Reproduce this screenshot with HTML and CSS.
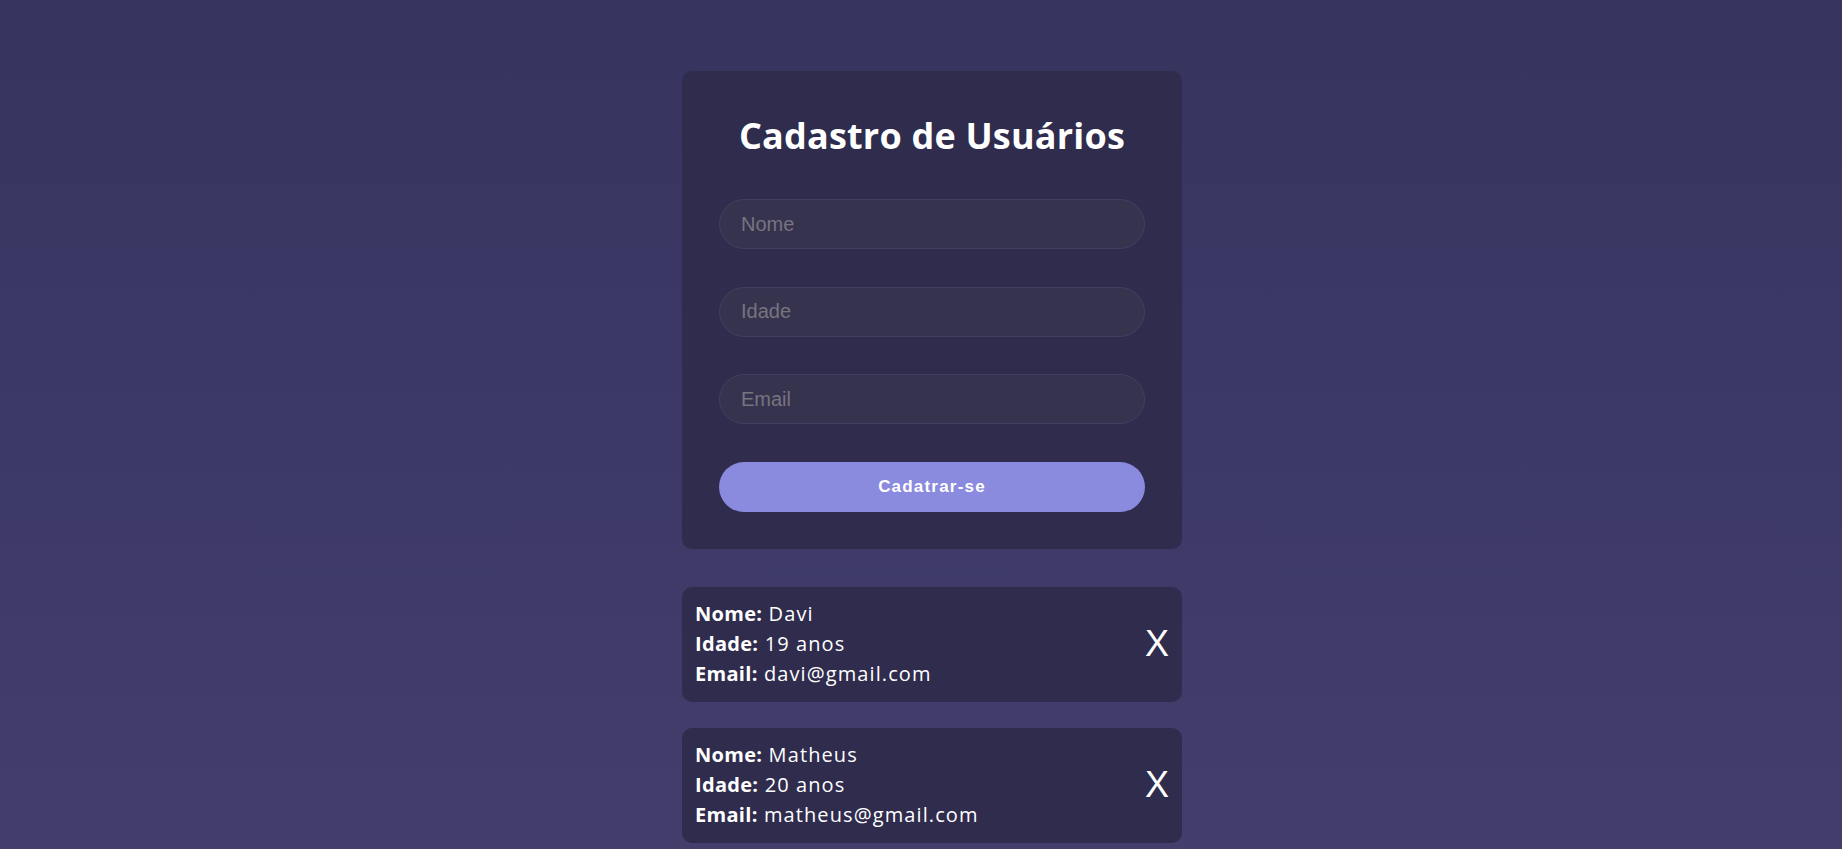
FILE: index.html
```html
<!DOCTYPE html>
<html lang="pt-BR">
<head>
<meta charset="utf-8">
<title>Cadastro de Usuários</title>
<link rel="stylesheet" href="styles.css">
</head>
<body>
<main class="page">
  <form class="form-card">
    <h1 class="title">Cadastro de Usuários</h1>
    <input class="field" type="text" placeholder="Nome">
    <input class="field" type="number" placeholder="Idade">
    <input class="field" type="email" placeholder="Email">
    <button class="submit" type="button">Cadatrar-se</button>
  </form>

  <div class="user-card">
    <div class="user-info">
      <p><strong>Nome:</strong> Davi</p>
      <p><strong>Idade:</strong> 19 anos</p>
      <p><strong>Email:</strong> davi@gmail.com</p>
    </div>
    <button class="remove" type="button">X</button>
  </div>

  <div class="user-card">
    <div class="user-info">
      <p><strong>Nome:</strong> Matheus</p>
      <p><strong>Idade:</strong> 20 anos</p>
      <p><strong>Email:</strong> matheus@gmail.com</p>
    </div>
    <button class="remove" type="button">X</button>
  </div>
</main>
</body>
</html>
```
FILE: styles.css
```css
* {
  box-sizing: border-box;
}

html, body {
  margin: 0;
  padding: 0;
}

body {
  min-height: 100vh;
  background: linear-gradient(180deg, #37345f 0%, #3c3866 45%, #433e6c 100%);
  font-family: "Open Sans", "Noto Sans", sans-serif;
  color: #ffffff;
  padding-left: 22px;
}

.page {
  width: 500px;
  margin: 0 auto;
  padding-top: 71px;
  display: flex;
  flex-direction: column;
  gap: 26px;
}

.form-card {
  background: #2f2c4d;
  border-radius: 10px;
  padding: 33px 37px 37px 37px;
  display: flex;
  flex-direction: column;
  margin-bottom: 12px;
}

.title {
  margin: 0 0 31px 0;
  text-align: center;
  font-family: "Open Sans", sans-serif;
  font-weight: 700;
  font-size: 36px;
  line-height: 64px;
  letter-spacing: 0.2px;
  color: #ffffff;
}

.field {
  height: 50px;
  width: 100%;
  border-radius: 25px;
  border: 1px solid #423e62;
  background: #36334f;
  padding: 0 21px;
  font-family: "Liberation Sans", Arial, sans-serif;
  font-size: 20px;
  color: #e0e0e0;
  margin-bottom: 37.5px;
  outline: none;
}

.field::placeholder {
  color: #77737f;
}

.field::-webkit-outer-spin-button,
.field::-webkit-inner-spin-button {
  -webkit-appearance: none;
  margin: 0;
}

.submit {
  height: 50px;
  width: 100%;
  border: none;
  border-radius: 25px;
  background: #8a8ade;
  color: #ffffff;
  font-family: "Liberation Sans", Arial, sans-serif;
  font-weight: 700;
  font-size: 17px;
  letter-spacing: 1.2px;
  cursor: pointer;
}

.user-card {
  background: #2f2c4d;
  border-radius: 10px;
  min-height: 115px;
  padding: 12px 13px 12px 13px;
  display: flex;
  align-items: center;
  justify-content: space-between;
}

.user-info p {
  margin: 0;
  font-family: "Open Sans", sans-serif;
  font-size: 20px;
  line-height: 30px;
  font-weight: 400;
  letter-spacing: 1.1px;
  color: #ffffff;
}

.user-info strong {
  font-weight: 700;
  letter-spacing: 0.3px;
}

.remove {
  background: none;
  border: none;
  padding: 0;
  color: #ffffff;
  font-family: "Liberation Sans", Arial, sans-serif;
  font-size: 36px;
  line-height: 1;
  cursor: pointer;
}
```
